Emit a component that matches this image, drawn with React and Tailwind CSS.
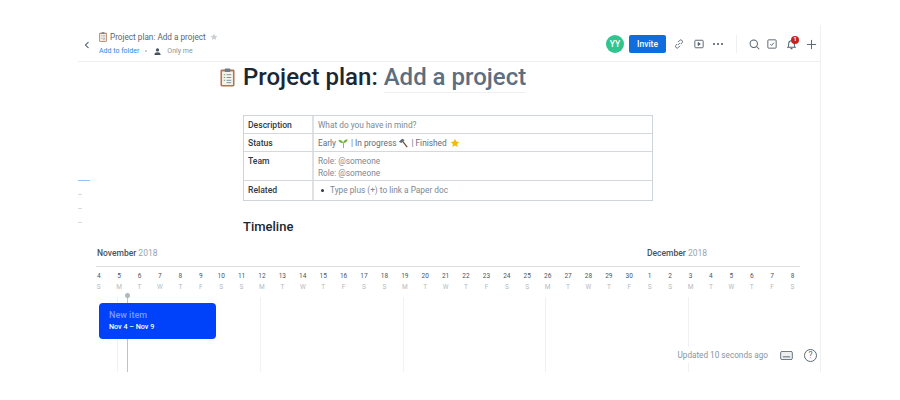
import React from "react";

const days = [
  ["4","S"],["5","M"],["6","T"],["7","W"],["8","T"],["9","F"],["10","S"],
  ["11","S"],["12","M"],["13","T"],["14","W"],["15","T"],["16","F"],["17","S"],
  ["18","S"],["19","M"],["20","T"],["21","W"],["22","T"],["23","F"],["24","S"],
  ["25","S"],["26","M"],["27","T"],["28","W"],["29","T"],["30","F"],["1","S"],
  ["2","S"],["3","M"],["4","T"],["5","W"],["6","T"],["7","F"],["8","S"],
];

function Clipboard({ className }) {
  return (
    <svg viewBox="0 0 16 20" className={className}>
      <rect x="0.5" y="1.5" width="15" height="18" rx="1.5" fill="#b5734f" />
      <rect x="2.2" y="3.5" width="11.6" height="14.5" fill="#f6f3ec" />
      <rect x="5" y="0.5" width="6" height="3.5" rx="0.8" fill="#6f7d88" />
      <path d="M4 7h1.5M4 10h1.5M4 13h1.5" stroke="#6da36b" strokeWidth="1.1" />
      <path d="M7 7h5M7 10h5M7 13h5M7 15.5h5" stroke="#7f8d9b" strokeWidth="1" />
    </svg>
  );
}

function Row({ label, children, last, pad }) {
  return (
    <div className={`grid grid-cols-[70px_1fr] ${last ? "" : "border-b border-[#d5d9dd]"}`}>
      <div className="border-r-2 border-[#dfe2e5] pl-[4px] pt-[3px] text-[8.600px] leading-[12px] font-medium text-[#2f3a45]">{label}</div>
      <div className={`pl-[4px] pt-[3px] ${pad} text-[8.300px] leading-[12px] text-[#5f6c78]`}>{children}</div>
    </div>
  );
}

export default function App() {
  return (
    <div className="relative w-[900px] h-[400px] bg-white overflow-hidden font-['Roboto',sans-serif]">
      <div className="absolute left-[78px] top-[180px] flex flex-col items-start">
        <div className="w-[12px] h-[1px] bg-[#92c0f2]" />
        <div className="w-[4px] h-[1px] bg-[#d9dcdf] mt-[13px]" />
        <div className="w-[4px] h-[1px] bg-[#d9dcdf] mt-[13px]" />
        <div className="w-[4px] h-[1px] bg-[#d9dcdf] mt-[13px]" />
      </div>

      <div className="ml-[78px] mt-[25px] w-[743px] h-[347px] border-r border-[#eef0f1] flex flex-col">
        <header className="h-[37px] shrink-0 border-b border-[#eceef0] flex items-start">
          <svg viewBox="0 0 8 10" className="w-[6px] h-[8px] ml-[6px] mt-[16px]" fill="none" stroke="#3d4a56" strokeWidth="1.4"><path d="M6 1 2 5l4 4" /></svg>
          <div className="ml-[9px] mt-[6px]">
            <div className="flex items-center h-[12px]">
              <Clipboard className="w-[8px] h-[10px]" />
              <span className="ml-[3px] text-[8.200px] leading-[12px] text-[#5b6670]">Project plan: Add a project</span>
              <svg viewBox="0 0 24 24" className="w-[8px] h-[8px] ml-[4px]" fill="#c9ced3"><path d="m12 2 3 6.6 7 .8-5.2 4.8 1.4 7L12 17.6 5.8 21.200l1.400-7L2 9.400l7-.8z" /></svg>
            </div>
            <div className="flex items-center h-[12px] mt-[2px] text-[7px] leading-[12px]">
              <span className="text-[#2f86ea]">Add to folder</span>
              <span className="ml-[6px] w-[2px] h-[2px] rounded-full bg-[#b5bcc3]" />
              <svg viewBox="0 0 10 10" className="w-[7px] h-[7px] ml-[7px]" fill="#47535f"><circle cx="5" cy="2.800" r="2.300" /><path d="M0.500 10c0-3 2-4 4.500-4s4.500 1 4.500 4z" /></svg>
              <span className="ml-[6px] text-[#8a949d]">Only me</span>
            </div>
          </div>
          <div className="ml-auto mt-[10px] flex items-center">
            <div className="w-[18px] h-[18px] rounded-full bg-[#2fc58f] text-white text-[8.500px] font-medium flex items-center justify-center">YY</div>
            <div className="ml-[5px] w-[37px] h-[18px] rounded-[2px] bg-[#0f6ddd] text-white text-[8.500px] font-medium flex items-center justify-center">Invite</div>
            <svg viewBox="0 0 12 12" className="w-[10px] h-[10px] ml-[8px]" fill="none" stroke="#515e6a" strokeWidth="1.100"><path d="M5 7 7 5M4.800 3.800 6.500 2a2 2 0 0 1 3.300 2.300L8.200 6M7.200 8.200 5.500 10A2 2 0 0 1 2.200 7.700L3.800 6" /></svg>
            <svg viewBox="0 0 12 12" className="w-[10px] h-[10px] ml-[10px]" fill="none" stroke="#515e6a" strokeWidth="1.100"><rect x="1" y="1.500" width="10" height="9" rx="1" /><path d="M5 4.200 7.500 6 5 7.800z" fill="#515e6a" /></svg>
            <div className="ml-[9px] flex gap-[2px]">
              <span className="w-[2px] h-[2px] rounded-full bg-[#47535f]" />
              <span className="w-[2px] h-[2px] rounded-full bg-[#47535f]" />
              <span className="w-[2px] h-[2px] rounded-full bg-[#47535f]" />
            </div>
            <div className="ml-[13px] w-px h-[18px] bg-[#eef0f1]" />
            <svg viewBox="0 0 12 12" className="w-[11px] h-[11px] ml-[12px]" fill="none" stroke="#515e6a" strokeWidth="1.100"><circle cx="5.200" cy="5.200" r="4" /><path d="m8.200 8.200 3 3" /></svg>
            <svg viewBox="0 0 12 12" className="w-[10px] h-[10px] ml-[7px]" fill="none" stroke="#515e6a" strokeWidth="1.100"><rect x="1" y="1" width="10" height="10" rx="1" /><path d="m4 6.200 1.500 1.500L8.200 4.500" /></svg>
            <div className="relative ml-[9px] w-[11px] h-[11px]">
              <svg viewBox="0 0 12 12" className="w-[11px] h-[11px]" fill="none" stroke="#515e6a" strokeWidth="1.100"><path d="M2 9c1-1 1-2 1-4a3 3 0 0 1 6 0c0 2 0 3 1 4zM5 10.500h2" /></svg>
              <span className="absolute -top-[3px] left-[5px] w-[8px] h-[8px] rounded-full bg-[#c8221a] text-white text-[5.500px] font-bold flex items-center justify-center">1</span>
            </div>
            <svg viewBox="0 0 12 12" className="w-[11px] h-[11px] ml-[9px] mr-[3px]" fill="none" stroke="#515e6a" strokeWidth="1"><path d="M6 1v10M1 6h10" /></svg>
          </div>
        </header>

        <div className="relative flex-1">
          <div className="flex items-center ml-[142px] mt-[1px] h-[29px]">
            <Clipboard className="w-[15px] h-[19px]" />
            <h1 className="ml-[8px] text-[24px] leading-[29px] font-medium text-[#1b2733] whitespace-nowrap">
              Project plan: <span className="text-[#5c6e80] border-b border-[#eef0f2] pb-[1px]">Add a project</span>
            </h1>
          </div>

          <div className="ml-[165px] mt-[23px] w-[410px] border border-[#cfd4d8]">
            <Row label="Description" pad="pb-[2px]"><span className="text-[#7d8894]">What do you have in mind?</span></Row>
            <Row label="Status" pad="pb-[2px]">
              <span className="flex items-center">
                Early
                <svg viewBox="0 0 12 12" className="w-[10px] h-[10px] ml-[2px]" fill="#6fb43a"><path d="M6 12V6h1v6zM6.500 6C5.500 3 3 2.500 0.500 2.500 1 5 3.500 6.500 6.500 6zM6.500 5c.5-2 2.500-3.500 5-3.500C11.500 4 9 6 6.500 6z" /></svg>
                <span className="ml-[3px]">| In progress</span>
                <svg viewBox="0 0 12 12" className="w-[10px] h-[10px] ml-[2px]"><path d="M5 3 11 11" stroke="#7a4a2a" strokeWidth="1.500" /><path d="M1 4.500 5 1l3 1.500-4 3.500z" fill="#5f6b75" /></svg>
                <span className="ml-[3px]">| Finished</span>
                <svg viewBox="0 0 24 24" className="w-[10px] h-[10px] ml-[3px]" fill="#f5b914"><path d="m12 1.500 3.200 7 7.300.9-5.400 5 1.500 7.400-6.600-3.700-6.600 3.700 1.500-7.400-5.400-5 7.300-.9z" /></svg>
              </span>
            </Row>
            <Row label="Team" pad="pb-[1px]"><div className="text-[#7d8894]">Role: @someone</div><div className="text-[#7d8894]">Role: @someone</div></Row>
            <Row label="Related" last pad="pb-[4px]">
              <div className="flex items-center pl-[3px]">
                <span className="w-[3px] h-[3px] rounded-full bg-[#2f3a45]" />
                <span className="ml-[6px] text-[#7d8894]">Type plus (+) to link a Paper doc</span>
              </div>
            </Row>
          </div>

          <h2 className="ml-[165px] mt-[17px] text-[13px] leading-[18px] font-medium text-[#1b2733]">Timeline</h2>

          <div className="ml-[19px] mt-[11px] w-[704px] flex text-[8.500px] leading-[12px] font-medium text-[#47535f]">
            <div className="w-[550px]">November <span className="font-normal text-[#9aa3ab]">2018</span></div>
            <div>December <span className="font-normal text-[#9aa3ab]">2018</span></div>
          </div>
          <div className="ml-[18px] mt-[7px] w-[704px] h-px bg-[#dcdfe2]" />

          <div className="ml-[10.500px] mt-[5px] grid grid-cols-[repeat(35,20.410px)] text-center text-[6.500px] leading-[9px]">
            {days.map(([n, d], i) => (
              <div key={i}>
                <div className="text-[#47535f]">{n}</div>
                <div className="text-[#b3bac1] mt-[2px]">{d}</div>
              </div>
            ))}
          </div>

          <div className="absolute left-[39px] top-[235px] bottom-0 flex">
            {[0, 1, 2, 3, 4].map((i) => (
              <div key={i} className="w-[142.800px] border-l border-[#f0f1f3]" />
            ))}
          </div>
          <div className="absolute left-[49px] top-[231px] bottom-0 w-px bg-[#bcc3ca]" />
          <div className="absolute left-[47px] top-[231px] w-[5px] h-[5px] rounded-full bg-[#b0b7be]" />

          <div className="absolute left-[21px] top-[241px] w-[117px] h-[36px] rounded-[4px] bg-[#0041fa] pl-[10px] pt-[6px]">
            <div className="text-[9px] leading-[12px] font-medium text-[#7d9bfa]">New item</div>
            <div className="text-[7.200px] leading-[11px] font-medium text-white">Nov 4 – Nov 9</div>
          </div>

          <div className="absolute right-[3px] top-[285px] bg-white flex items-center h-[16px]">
            <span className="text-[8.200px] text-[#8a949d]">Updated 10 seconds ago</span>
            <svg viewBox="0 0 14 10" className="w-[13px] h-[9px] ml-[12px]" fill="#eceef0" stroke="#5c6873"><rect x="0.500" y="0.500" width="13" height="9" rx="1.500" /><path d="M3 6.500h8" strokeWidth="1.100" /></svg>
            <div className="ml-[11px] w-[13px] h-[13px] rounded-full border border-[#5c6873] text-[#5c6873] text-[8.500px] flex items-center justify-center">?</div>
          </div>
        </div>
      </div>
    </div>
  );
}
